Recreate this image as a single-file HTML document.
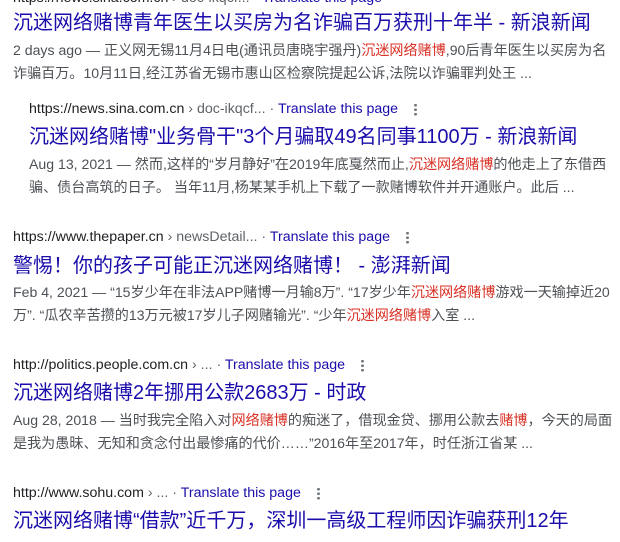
<!DOCTYPE html>
<html><head><meta charset="utf-8"><style>
body{margin:0;width:620px;height:542px;overflow:hidden;background:#fff;font-family:"Liberation Sans","Noto Sans CJK SC",sans-serif;position:relative}
.a{position:absolute;white-space:nowrap}
.u{font-size:14.2px;color:#202124;line-height:18px}
.u .g{color:#5f6368}
.u .t{color:#1a0dab}
.d{display:inline-block;vertical-align:middle;margin-left:16px;width:3px;height:13px;background:radial-gradient(circle,#70757a 1.3px,transparent 1.5px) 0 0/3px 4.5px repeat-y}
.h{font-size:20px;color:#1a0dab;line-height:24px}
.s{font-size:14.1px;color:#4d5156;line-height:23px}
.r{color:#d93025}
</style></head><body>
<div class="a u" style="left:13px;top:-11px">https://news.sina.com.cn <span class="g">› doc-ikqcf...</span> · <span class="t">Translate this page</span></div>
<div class="a h" style="left:13px;top:11px">沉迷网络赌博青年医生以买房为名诈骗百万获刑十年半 - 新浪新闻</div>
<div class="a s" style="left:13px;top:39px">2 days ago — 正义网无锡11月4日电(通讯员唐晓宇强丹)<span class="r">沉迷网络赌博</span>,90后青年医生以买房为名<br>诈骗百万。10月11日,经江苏省无锡市惠山区检察院提起公诉,法院以诈骗罪判处王 ...</div>

<div class="a u" style="left:29px;top:100px">https://news.sina.com.cn <span class="g">› doc-ikqcf...</span> <span class="g">·</span> <span class="t">Translate this page</span><span class="d"></span></div>
<div class="a h" style="left:29px;top:125px">沉迷网络赌博"业务骨干"3个月骗取49名同事1100万 - 新浪新闻</div>
<div class="a s" style="left:29px;top:153px">Aug 13, 2021 — 然而,这样的“岁月静好”在2019年底戛然而止,<span class="r">沉迷网络赌博</span>的他走上了东借西<br>骗、债台高筑的日子。 当年11月,杨某某手机上下载了一款赌博软件并开通账户。此后 ...</div>

<div class="a u" style="left:13px;top:228px">https://www.thepaper.cn <span class="g">› newsDetail...</span> <span class="g">·</span> <span class="t">Translate this page</span><span class="d"></span></div>
<div class="a h" style="left:13px;top:254px">警惕！你的孩子可能正沉迷网络赌博！ - 澎湃新闻</div>
<div class="a s" style="left:13px;top:281px">Feb 4, 2021 — “15岁少年在非法APP赌博一月输8万”. “17岁少年<span class="r">沉迷网络赌博</span>游戏一天输掉近20<br>万”. “瓜农辛苦攒的13万元被17岁儿子网赌输光”. “少年<span class="r">沉迷网络赌博</span>入室 ...</div>

<div class="a u" style="left:13px;top:356px">http://politics.people.com.cn <span class="g">› ...</span> <span class="g">·</span> <span class="t">Translate this page</span><span class="d"></span></div>
<div class="a h" style="left:13px;top:381px">沉迷网络赌博2年挪用公款2683万 - 时政</div>
<div class="a s" style="left:13px;top:409px">Aug 28, 2018 — 当时我完全陷入对<span class="r">网络赌博</span>的痴迷了，借现金贷、挪用公款去<span class="r">赌博</span>，今天的局面<br>是我为愚昧、无知和贪念付出最惨痛的代价……”2016年至2017年，时任浙江省某 ...</div>

<div class="a u" style="left:13px;top:484px">http://www.sohu.com <span class="g">› ...</span> <span class="g">·</span> <span class="t">Translate this page</span><span class="d"></span></div>
<div class="a h" style="left:13px;top:509px">沉迷网络赌博“借款”近千万，深圳一高级工程师因诈骗获刑12年</div>
</body></html>
